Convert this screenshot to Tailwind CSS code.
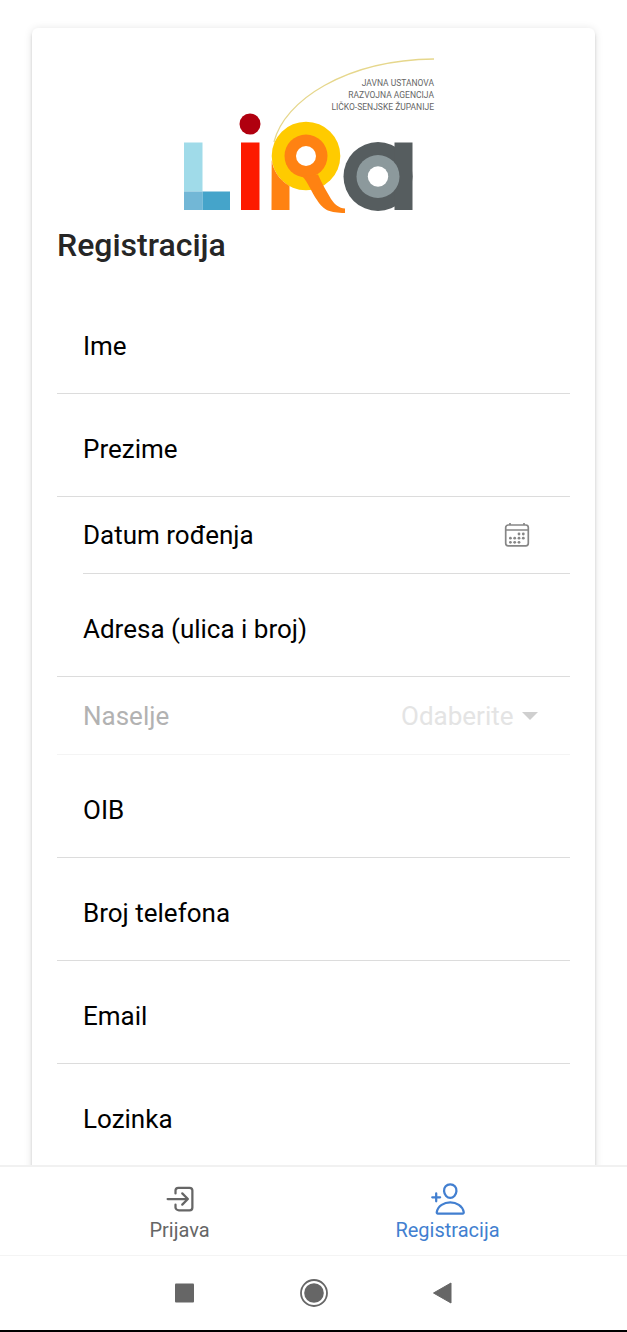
<!DOCTYPE html>
<html lang="hr">
<head>
  <meta charset="UTF-8">
  <meta name="viewport" content="width=device-width, initial-scale=1.0">
  <title>Registracija</title>
  <script src="https://cdn.jsdelivr.net/npm/@tailwindcss/browser@4"></script>
</head>
<body class="flex h-screen flex-col bg-white font-[Roboto,sans-serif] text-black">
  <!-- Sadržaj -->
  <main class="min-h-0 flex-1 overflow-y-auto px-8 pt-7 [scrollbar-width:none]">
    <form class="rounded-md bg-white px-[25px] py-[26px] shadow-[0_5px_2px_-3px_rgba(0,0,0,0.2),0_3px_3px_0_rgba(0,0,0,0.14),0_1px_8px_0_rgba(0,0,0,0.12)]">
      <!-- Logo -->
      <svg class="mx-auto block h-[162px] w-[280px]" viewBox="174 54 280 162" role="img" aria-label="LiRa">
        <path d="M274 142C284 101 345 60 434 59" fill="none" stroke="#e6d78c" stroke-width="1.3"/>
        <rect x="184" y="142.500" width="18.500" height="49" fill="#a0dbe9"/>
        <rect x="184" y="191.500" width="18.500" height="18.500" fill="#72b7d6"/>
        <rect x="202.500" y="191.500" width="27.500" height="18.500" fill="#45a4ca"/>
        <circle cx="250" cy="124" r="10.500" fill="#b0000f"/>
        <rect x="241" y="142.500" width="18.500" height="67.500" fill="#fd1a00"/>
        <circle cx="306" cy="156" r="34.300" fill="#ffcb00"/>
        <path d="M271.700 160C273 170 279 180 289.500 186V210h-18z" fill="#ff8212"/>
        <circle cx="306" cy="156" r="21.500" fill="#ff8212"/>
        <path d="M302 176C308 182 312 193 317 200C324 211 330 212.500 345 213V208.500C339 208 335 205 331 199C327 192 322 184 318 174.500z" fill="#ff8212"/>
        <circle cx="306" cy="156" r="10" fill="#fff"/>
        <circle cx="378" cy="176.500" r="34.500" fill="#565d5f"/>
        <rect x="394.500" y="142.500" width="18" height="67.500" fill="#565d5f"/>
        <circle cx="378" cy="176.500" r="21.500" fill="#8c999c"/>
        <circle cx="378" cy="176.500" r="10.200" fill="#fff"/>
        <g fill="#666" font-family="Roboto, sans-serif" font-size="8.500" text-anchor="end">
          <text x="434" y="86">JAVNA USTANOVA</text>
          <text x="434" y="98">RAZVOJNA AGENCIJA</text>
          <text x="434" y="110">LIČKO-SENJSKE ŽUPANIJE</text>
        </g>
      </svg>

      <h1 class="mt-2.5 mb-[27px] text-[32px] leading-[38px] font-medium text-[#262626]">Registracija</h1>

      <!-- Polja -->
      <div class="text-[26px] leading-8">
        <div class="flex h-[103px] items-center gap-4 border-b border-[#dcdcdc] pt-2 pl-[26px]">
          <label for="ime">Ime</label>
          <input id="ime" type="text" class="min-w-0 flex-1 outline-none">
        </div>
        <div class="flex h-[103px] items-center gap-4 border-b border-[#dcdcdc] pt-2 pl-[26px]">
          <label for="prezime">Prezime</label>
          <input id="prezime" type="text" class="min-w-0 flex-1 outline-none">
        </div>
        <div class="ml-[26px] flex h-[77px] items-center gap-4 border-b border-[#dcdcdc] pr-10">
          <label for="datum">Datum rođenja</label>
          <input id="datum" type="text" class="min-w-0 flex-1 outline-none">
          <button type="button" aria-label="Odaberi datum" class="text-[#868686]">
            <svg class="block size-[26px]" viewBox="0 0 26 26" fill="none" stroke="currentColor" stroke-width="1.700">
              <rect x="1.700" y="3" width="22.600" height="20.800" rx="2.500"/>
              <path d="M2 8h22M6 1v2M20 1v2"/>
              <g fill="currentColor" stroke="none">
                <circle cx="15" cy="12" r="1.400"/><circle cx="19.300" cy="12" r="1.400"/>
                <circle cx="6.400" cy="16.200" r="1.400"/><circle cx="10.700" cy="16.200" r="1.400"/><circle cx="15" cy="16.200" r="1.400"/><circle cx="19.300" cy="16.200" r="1.400"/>
                <circle cx="6.400" cy="20.300" r="1.400"/><circle cx="10.700" cy="20.300" r="1.400"/><circle cx="15" cy="20.300" r="1.400"/>
              </g>
            </svg>
          </button>
        </div>
        <div class="flex h-[103px] items-center gap-4 border-b border-[#dcdcdc] pt-2 pl-[26px]">
          <label for="adresa">Adresa (ulica i broj)</label>
          <input id="adresa" type="text" class="min-w-0 flex-1 outline-none">
        </div>
        <div class="flex h-[78px] items-center border-b border-[#f4f4f4] pr-8 pl-[26px]">
          <label for="naselje" class="flex-1 text-[#b2b2b2]">Naselje</label>
          <select id="naselje" disabled class="appearance-none text-[#e4e4e4] opacity-100">
            <option>Odaberite</option>
          </select>
          <svg class="ml-2 h-2 w-4 text-[#cfcfcf]" viewBox="0 0 16 8" fill="currentColor"><path d="M0 0h16L8 8z"/></svg>
        </div>
        <div class="flex h-[103px] items-center gap-4 border-b border-[#dcdcdc] pt-2 pl-[26px]">
          <label for="oib">OIB</label>
          <input id="oib" type="text" inputmode="numeric" class="min-w-0 flex-1 outline-none">
        </div>
        <div class="flex h-[103px] items-center gap-4 border-b border-[#dcdcdc] pt-2 pl-[26px]">
          <label for="telefon">Broj telefona</label>
          <input id="telefon" type="tel" class="min-w-0 flex-1 outline-none">
        </div>
        <div class="flex h-[103px] items-center gap-4 border-b border-[#dcdcdc] pt-2 pl-[26px]">
          <label for="email">Email</label>
          <input id="email" type="email" class="min-w-0 flex-1 outline-none">
        </div>
        <div class="flex h-[103px] items-center gap-4 border-b border-[#dcdcdc] pt-2 pl-[26px]">
          <label for="lozinka">Lozinka</label>
          <input id="lozinka" type="password" class="min-w-0 flex-1 outline-none">
        </div>
      </div>
    </form>
  </main>

  <!-- Kartice -->
  <nav class="flex h-[90px] justify-center border-t-2 border-[#f1f1f1] bg-white text-xl leading-6">
    <a href="#prijava" class="flex w-[268px] flex-col items-center gap-px pt-3.5 text-[#666]">
      <svg class="size-9" viewBox="0 0 512 512" fill="none" stroke="currentColor" stroke-width="32" stroke-linecap="round" stroke-linejoin="round">
        <path d="M192 176v-40a40 40 0 0140-40h160a40 40 0 0140 40v240a40 40 0 01-40 40H240c-22.090 0-48-17.910-48-40v-40"/>
        <path d="M288 336l80-80-80-80M80 256h288"/>
      </svg>
      Prijava
    </a>
    <a href="#registracija" class="flex w-[268px] flex-col items-center gap-px pt-3.5 text-[#427fd0]">
      <svg class="size-9" viewBox="0 0 512 512" fill="none" stroke="currentColor" stroke-width="32" stroke-linecap="round" stroke-linejoin="round">
        <path d="M376 144c-3.920 52.870-44 96-88 96s-84.150-43.120-88-96c-4-55 35-96 88-96s92 42 88 96z"/>
        <path d="M288 304c-87 0-175.300 48-191.640 138.600-2 10.920 4.210 21.400 15.650 21.400H464c11.440 0 17.620-10.480 15.650-21.400C463.300 352 375 304 288 304z"/>
        <path d="M88 176v112M144 232H32"/>
      </svg>
      Registracija
    </a>
  </nav>

  <!-- Navigacija sustava -->
  <div class="flex h-[77px] items-center justify-center border-t border-b-2 border-t-[#f4f4f4] border-b-black bg-white text-[#666]">
    <button type="button" aria-label="Nedavno" class="flex w-[129px] justify-center">
      <svg class="size-7" viewBox="0 0 28 28" fill="currentColor"><rect x="4" y="4.500" width="19" height="19" rx="1"/></svg>
    </button>
    <button type="button" aria-label="Početna" class="flex w-[129px] justify-center">
      <svg class="size-7" viewBox="0 0 28 28" fill="currentColor"><circle cx="14" cy="14" r="13" fill="none" stroke="currentColor" stroke-width="1.800"/><circle cx="14" cy="14" r="9.800"/></svg>
    </button>
    <button type="button" aria-label="Natrag" class="flex w-[129px] justify-center">
      <svg class="size-7" viewBox="0 0 28 28" fill="currentColor" stroke="currentColor" stroke-linejoin="round"><path d="M4.500 14L22 4v20z"/></svg>
    </button>
  </div>
</body>
</html>
